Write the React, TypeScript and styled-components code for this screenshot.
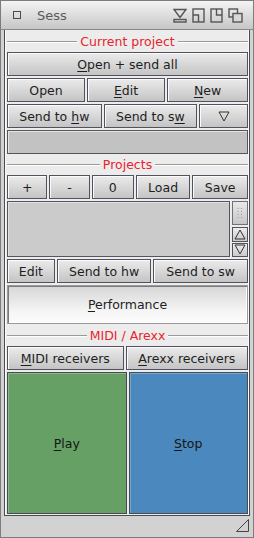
import React from "react";
import styled, { createGlobalStyle } from "styled-components";

const Global = createGlobalStyle`
  html, body {
    margin: 0;
    padding: 0;
    background: #d2d2d2;
  }
  body {
    font-family: "DejaVu Sans", "Liberation Sans", sans-serif;
  }
`;

const Window = styled.div`
  width: 254px;
  height: 538px;
  box-sizing: border-box;
  border: 1px solid #7c7c7c;
  background: #d2d2d2;
  display: flex;
  flex-direction: column;
`;

const TitleBar = styled.div`
  height: 28px;
  border-bottom: 1px solid #8a8a8a;
  background: linear-gradient(#f4f4f4, #c6c6c6);
  display: flex;
  align-items: center;
  padding-left: 12px;
  box-sizing: content-box;
`;

const CloseBox = styled.div`
  width: 6px;
  height: 6px;
  border: 1px solid #4a4a4a;
`;

const Title = styled.span`
  margin-left: 16px;
  font-size: 13px;
  color: #5a5a5a;
  flex: 1;
`;

const Gadgets = styled.div`
  display: flex;
  align-items: center;
  gap: 5px;
  padding-right: 10px;
  svg {
    display: block;
  }
`;

const Body = styled.div`
  flex: 1;
  padding: 0 3px;
  display: flex;
  flex-direction: column;
`;

const Panel = styled.div`
  flex: 1;
  display: flex;
  flex-direction: column;
  background: #ececec;
  border: 1px solid #4c4c4c;
  border-top: none;
  box-shadow: inset 1px 0 0 #fafafa, inset -1px 0 0 #fafafa;
  padding: 0 1px 1px 2px;
`;

const SectionLabel = styled.div<{ $h: number }>`
  height: ${({ $h }) => $h}px;
  display: flex;
  align-items: center;
  gap: 3px;
  font-size: 12.5px;
  color: #e8242c;
  &::before,
  &::after {
    content: "";
    flex: 1;
    height: 1px;
    background: #9a9a9a;
    box-shadow: 0 1px 0 #ffffff;
  }
`;

const Row = styled.div<{ $mt?: number }>`
  display: flex;
  gap: 2px;
  height: 24px;
  margin-top: ${({ $mt }) => $mt ?? 0}px;
`;

const Button = styled.div<{ $grow?: number }>`
  flex: ${({ $grow }) => $grow ?? 1} 1 0;
  min-width: 0;
  box-sizing: border-box;
  border: 1px solid #52525e;
  background: linear-gradient(#ebebeb, #c4c4c4);
  box-shadow: inset 1px 1px 0 #fbfbfb;
  display: flex;
  align-items: center;
  justify-content: center;
  font-size: 12.5px;
  color: #1e1e1e;
  white-space: nowrap;
  u {
    text-decoration-thickness: 1px;
    text-underline-offset: 2px;
  }
`;

const TextField = styled.div`
  margin-top: 2px;
  height: 24px;
  box-sizing: border-box;
  border: 1px solid #55555e;
  background: #c2c2c2;
  box-shadow: inset 1px 1px 0 #e6e6e6;
`;

const ListArea = styled.div`
  margin-top: 2px;
  height: 56px;
  display: flex;
  gap: 2px;
`;

const ListBox = styled.div`
  flex: 1;
  box-sizing: border-box;
  border: 1px solid #55555e;
  background: #cbcbcb;
  box-shadow: inset 1px 1px 0 #e2e2e2;
`;

const ScrollBar = styled.div`
  width: 16px;
  display: flex;
  flex-direction: column;
  gap: 1px;
`;

const Knob = styled.div`
  height: 24px;
  box-sizing: border-box;
  border: 1px solid #70707a;
  background: linear-gradient(#e8e8e8, #c6c6c6);
  display: flex;
  align-items: center;
  justify-content: center;
  margin-bottom: 1px;
`;

const Arrow = styled.div`
  flex: 1;
  box-sizing: border-box;
  border: 1px solid #52525e;
  background: linear-gradient(#ececec, #cacaca);
  display: flex;
  align-items: center;
  justify-content: center;
`;

const PerfButton = styled.div`
  margin-top: 2px;
  height: 39px;
  box-sizing: border-box;
  border: 1px solid #9a9a9a;
  box-shadow: inset 1px 1px 0 #7a7a7a, inset -1px -1px 0 #ffffff;
  background: linear-gradient(#d6d6d6, #f6f6f6 70%, #fcfcfc);
  display: flex;
  align-items: center;
  justify-content: center;
  font-size: 12.5px;
  color: #1e1e1e;
  u {
    text-underline-offset: 2px;
  }
`;

const BigRow = styled.div`
  flex: 1;
  margin-top: 2px;
  display: flex;
  gap: 2px;
`;

const BigButton = styled.div<{ $color: string }>`
  flex: 1;
  box-sizing: border-box;
  border: 1px solid #4a4a54;
  box-shadow: inset 1px 1px 0 rgba(255, 255, 255, 0.25);
  background: ${({ $color }) => $color};
  display: flex;
  align-items: center;
  justify-content: center;
  font-size: 12.5px;
  color: #151515;
  u {
    text-underline-offset: 2px;
  }
`;

const Footer = styled.div`
  height: 21px;
  display: flex;
  justify-content: flex-end;
  align-items: flex-start;
  padding: 3px 4px 0 0;
  box-sizing: border-box;
`;

const IconifyIcon = () => (
  <svg width="14" height="15" viewBox="0 0 14 15" fill="none" stroke="#555" strokeWidth="1.4">
    <path d="M1 1.5 H13 L7 9.5 Z" />
    <rect x="1" y="11.5" width="12" height="2.5" />
  </svg>
);

const ShrinkIcon = () => (
  <svg width="13" height="15" viewBox="0 0 13 15" fill="none" stroke="#555" strokeWidth="1.4">
    <rect x="1" y="1" width="11" height="13" />
    <path d="M1 7 H6.5 V14" />
  </svg>
);

const ZoomIcon = () => (
  <svg width="13" height="15" viewBox="0 0 13 15" fill="none" stroke="#555" strokeWidth="1.4">
    <rect x="1" y="1" width="11" height="13" />
    <path d="M6.5 1 V7 H12" />
  </svg>
);

const DepthIcon = () => (
  <svg width="15" height="15" viewBox="0 0 15 15" fill="none" stroke="#555" strokeWidth="1.4">
    <rect x="1" y="1" width="8.5" height="8" />
    <rect x="5" y="5.5" width="9" height="8.5" fill="#d8d8d8" />
  </svg>
);

const Dots = () => (
  <svg width="6" height="12" viewBox="0 0 6 12" fill="#9a9a9a">
    {[0, 3, 6, 9].map((y) => (
      <React.Fragment key={y}>
        <rect x="0.5" y={y + 1} width="1" height="1" />
        <rect x="4" y={y + 1} width="1" height="1" />
      </React.Fragment>
    ))}
  </svg>
);

const Tri = ({ up }: { up?: boolean }) => (
  <svg width="12" height="11" viewBox="0 0 12 11" fill="none" stroke="#333" strokeWidth="1">
    {up ? <path d="M1 10 H11 L6 1 Z" /> : <path d="M1 1 H11 L6 10 Z" />}
  </svg>
);

const Grip = () => (
  <svg width="13" height="13" viewBox="0 0 13 13" fill="none" stroke="#444" strokeWidth="1">
    <path d="M0.5 12.5 L12.5 0.5 V12.5 Z" />
  </svg>
);

export default function App() {
  return (
    <>
      <Global />
      <Window>
        <TitleBar>
          <CloseBox />
          <Title>Sess</Title>
          <Gadgets>
            <IconifyIcon />
            <ShrinkIcon />
            <ZoomIcon />
            <DepthIcon />
          </Gadgets>
        </TitleBar>
        <Body>
          <Panel>
            <SectionLabel $h={22}>Current project</SectionLabel>
            <Row>
              <Button>
                <span><u>O</u>pen + send all</span>
              </Button>
            </Row>
            <Row $mt={2}>
              <Button $grow={78}>Open</Button>
              <Button $grow={78}>
                <span><u>E</u>dit</span>
              </Button>
              <Button $grow={81}>
                <span><u>N</u>ew</span>
              </Button>
            </Row>
            <Row $mt={2}>
              <Button $grow={95}>
                <span>Send to <u>h</u>w</span>
              </Button>
              <Button $grow={94}>
                <span>Send to s<u>w</u></span>
              </Button>
              <Button $grow={48}>
                <Tri />
              </Button>
            </Row>
            <TextField />
            <SectionLabel $h={21}>Projects</SectionLabel>
            <Row>
              <Button $grow={40}>+</Button>
              <Button $grow={40}>-</Button>
              <Button $grow={42}>0</Button>
              <Button $grow={55}>Load</Button>
              <Button $grow={56}>Save</Button>
            </Row>
            <ListArea>
              <ListBox />
              <ScrollBar>
                <Knob>
                  <Dots />
                </Knob>
                <Arrow>
                  <Tri up />
                </Arrow>
                <Arrow>
                  <Tri />
                </Arrow>
              </ScrollBar>
            </ListArea>
            <Row $mt={2}>
              <Button $grow={47}>Edit</Button>
              <Button $grow={95}>Send to hw</Button>
              <Button $grow={95}>Send to sw</Button>
            </Row>
            <PerfButton>
              <span><u>P</u>erformance</span>
            </PerfButton>
            <SectionLabel $h={22}>MIDI / Arexx</SectionLabel>
            <Row>
              <Button $grow={117}>
                <span><u>M</u>IDI receivers</span>
              </Button>
              <Button $grow={123}>
                <span><u>A</u>rexx receivers</span>
              </Button>
            </Row>
            <BigRow>
              <BigButton $color="#66a065">
                <span><u>P</u>lay</span>
              </BigButton>
              <BigButton $color="#4a88bd">
                <span><u>S</u>top</span>
              </BigButton>
            </BigRow>
          </Panel>
        </Body>
        <Footer>
          <Grip />
        </Footer>
      </Window>
    </>
  );
}
